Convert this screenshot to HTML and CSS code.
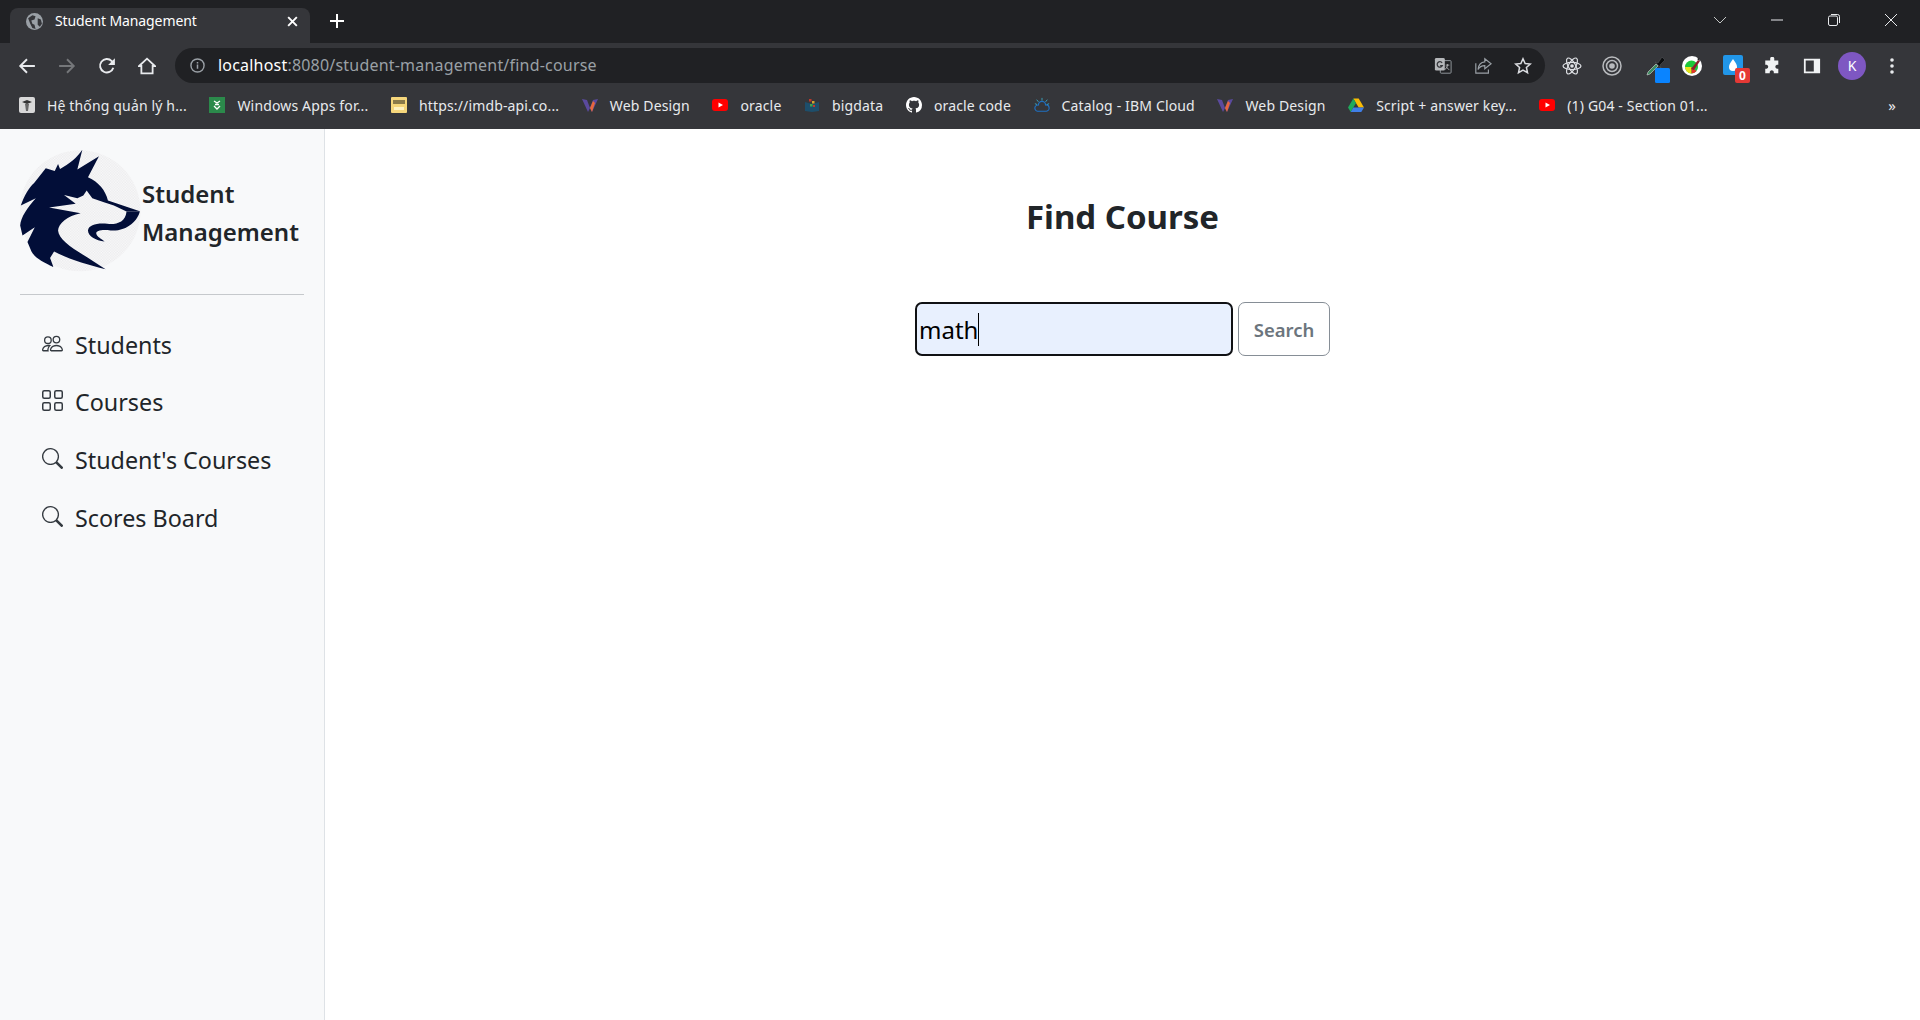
FILE: index.html
```html
<!DOCTYPE html>
<html lang="en">
<head>
    <meta charset="UTF-8">
    <meta name="viewport" content="width=device-width, initial-scale=1.0">
    <title>Student Management</title>
    <link rel="stylesheet" href="styles.css">
</head>
<body>
    <svg class="sprite" xmlns="http://www.w3.org/2000/svg">
        <symbol id="i-web" viewBox="0 0 16 16"><path d="M0 2l5 1 3 8-2 4z" fill="#5b4a9e"/><path d="M16 2l-5 1-3 8 2 4z" fill="#5b4a9e"/><path d="M11 4l-3 7 2 4 3-9z" fill="#e8673c"/></symbol>
        <symbol id="i-yt" viewBox="0 0 16 16"><rect y="2" width="16" height="12" rx="3" fill="#f00"/><path d="M6.5 5.5v5L11 8z" fill="#fff"/></symbol>
        <symbol id="i-gh" viewBox="0 0 16 16"><path fill="#fff" d="M8 0C3.58 0 0 3.58 0 8c0 3.54 2.29 6.53 5.47 7.59.4.07.55-.17.55-.38 0-.19-.01-.82-.01-1.49-2.01.37-2.53-.49-2.69-.94-.09-.23-.48-.94-.82-1.13-.28-.15-.68-.52-.01-.53.63-.01 1.08.58 1.23.82.72 1.21 1.87.87 2.33.66.07-.52.28-.87.51-1.07-1.78-.2-3.64-.89-3.64-3.95 0-.87.31-1.59.82-2.15-.08-.2-.36-1.02.08-2.12 0 0 .67-.21 2.2.82.64-.18 1.32-.27 2-.27.68 0 1.36.09 2 .27 1.53-1.04 2.2-.82 2.2-.82.44 1.1.16 1.92.08 2.12.51.56.82 1.27.82 2.15 0 3.07-1.87 3.75-3.65 3.95.29.25.54.73.54 1.48 0 1.07-.01 1.93-.01 2.2 0 .21.15.46.55.38A8.013 8.013 0 0016 8c0-4.42-3.58-8-8-8z"/></symbol>
        <symbol id="i-search" viewBox="0 0 16 16"><path fill="currentColor" d="M11.742 10.344a6.5 6.5 0 1 0-1.397 1.398h-.001c.03.04.062.078.098.115l3.85 3.85a1 1 0 0 0 1.415-1.414l-3.85-3.85a1.007 1.007 0 0 0-.115-.1zM12 6.5a5.5 5.5 0 1 1-11 0 5.5 5.5 0 0 1 11 0z"/></symbol>
    </svg>

    <!-- browser chrome -->
    <header class="chrome">
        <div class="tabstrip">
            <div class="tab">
                <svg class="favicon" viewBox="0 0 16 16"><circle cx="8" cy="8" r="8" fill="#9aa0a6"/><path d="M2 5l4-3 3 1-1 3-3 1 1 3 2 1 1 4-3-1-2-4zM11 5l3 1 1 4-2 3-2-2z" fill="#35363a"/></svg>
                <span class="tab-title">Student Management</span>
                <svg class="tab-close" viewBox="0 0 12 12"><path d="M2 2l8 8M10 2l-8 8" stroke="#fff" stroke-width="1.8"/></svg>
            </div>
            <svg class="new-tab" viewBox="0 0 16 16"><path d="M8 1v14M1 8h14" stroke="#fff" stroke-width="2"/></svg>
            <div class="window-controls">
                <svg viewBox="0 0 14 14"><path d="M1 4l6 6 6-6" fill="none" stroke="#c4c7c5"/></svg>
                <svg viewBox="0 0 14 14"><path d="M1 7h12" stroke="#e8eaed"/></svg>
                <svg viewBox="0 0 14 14"><rect x="1.5" y="3" width="9" height="9.5" rx="1.5" fill="none" stroke="#e8eaed"/><path d="M4 1.5h6.5a2 2 0 0 1 2 2V10" fill="none" stroke="#e8eaed"/></svg>
                <svg viewBox="0 0 14 14"><path d="M1 1l12 12M13 1L1 13" stroke="#e8eaed"/></svg>
            </div>
        </div>

        <div class="toolbar">
            <div class="slot"><svg viewBox="0 0 16 16"><path d="M15 8H2M8 2L2 8l6 6" fill="none" stroke="#e8eaed" stroke-width="1.7"/></svg></div>
            <div class="slot"><svg viewBox="0 0 16 16"><path d="M1 8h13M8 2l6 6-6 6" fill="none" stroke="#75777a" stroke-width="1.7"/></svg></div>
            <div class="slot"><svg viewBox="0 0 16 16"><path d="M13.6 9.5A6 6 0 1 1 12.2 3.6L14 5.5" fill="none" stroke="#e8eaed" stroke-width="1.7"/><path d="M15 1v6H9z" fill="#e8eaed"/></svg></div>
            <div class="slot"><svg viewBox="0 0 16 16"><path d="M1 8l7-6.5L15 8h-2v6.5H3V8z" fill="none" stroke="#e8eaed" stroke-width="1.6"/></svg></div>

            <div class="omnibox">
                <svg class="info" viewBox="0 0 16 16"><circle cx="8" cy="8" r="7" fill="none" stroke="#9aa0a6" stroke-width="1.5"/><path d="M8 7v4.5M8 4.2v1.6" stroke="#9aa0a6" stroke-width="1.6"/></svg>
                <span class="url"><span class="url-host">localhost</span>:8080/student-management/find-course</span>
                <div class="omni-icons">
                    <div class="slot"><svg viewBox="0 0 20 20"><rect x="7" y="4" width="12" height="14" rx="1" fill="none" stroke="#9aa0a6"/><rect x="1" y="1" width="11" height="14" rx="1.5" fill="#b5b7ba"/><path d="M9 6.5a3 3 0 1 0 .3 3H6.8" fill="none" stroke="#35363a" stroke-width="1.4"/><path d="M13 9h4M15 8v1c0 2-1.5 4-3 5M13.5 10.5c.7 1.6 2 3 3.5 3.5" fill="none" stroke="#b5b7ba"/></svg></div>
                    <div class="slot"><svg viewBox="0 0 20 20"><path d="M2 7v11h14v-4" fill="none" stroke="#9aa0a6" stroke-width="1.3"/><path d="M12 2l7 5.5-7 5.5V9.5C8.5 9.5 6 11 4.5 14 5 9 8 5.7 12 5.5z" fill="none" stroke="#9aa0a6" stroke-width="1.3"/></svg></div>
                    <div class="slot"><svg viewBox="0 0 20 20"><path d="M10 2l2.4 5.3 5.7.6-4.300 3.800 1.200 5.700L10 14.500l-5 2.900 1.200-5.700L1.900 7.900l5.700-.6z" fill="none" stroke="#dadce0" stroke-width="1.7"/></svg></div>
                </div>
            </div>

            <div class="slot"><svg class="react" viewBox="0 0 20 20"><g fill="none" stroke="#dfe1e5" stroke-width="1.2"><ellipse cx="10" cy="10" rx="9" ry="3.6"/><ellipse cx="10" cy="10" rx="9" ry="3.6" transform="rotate(60 10 10)"/><ellipse cx="10" cy="10" rx="9" ry="3.6" transform="rotate(120 10 10)"/></g><circle cx="10" cy="10" r="1.8" fill="#dfe1e5"/></svg></div>
            <div class="slot"><svg class="target" viewBox="0 0 20 20"><g fill="none" stroke="#b8babd"><circle cx="10" cy="10" r="9" stroke-width="1.5"/><circle cx="10" cy="10" r="5.5" stroke-width="1.5"/></g><circle cx="10" cy="10" r="2.8" fill="#b8babd"/></svg></div>
            <div class="slot slot-eyedrop"><svg viewBox="0 0 26 28"><path d="M2 20l1-3 8-8 2 2-8 8z" fill="#3d8a5f" stroke="#d5d7d9" stroke-width=".6"/><path d="M10 7l3 1 4-6 3 3-5 5 1 3z" fill="#0c0e10" stroke="#5a5d60" stroke-width=".5"/><rect x="10" y="13" width="15" height="15" rx="1.5" fill="#0a84ff"/></svg></div>
            <div class="slot"><svg class="wheel" viewBox="0 0 20 20"><circle cx="10" cy="10" r="10" fill="#fff"/><circle cx="9.5" cy="11" r="6.5" fill="#1ec83a"/><path d="M9.5 11L3 11a6.5 6.5 0 0 0 6.5 6.5z" fill="#e9e21b"/><path d="M9.5 11v6.5a6.5 6.5 0 0 0 5-2.5z" fill="#e5352b"/><path d="M9 13L16 4l2 1-6 9z" fill="#8e1f2c"/><path d="M15 3l3 2-1-3z" fill="#101214"/></svg></div>
            <div class="slot slot-drop"><svg viewBox="0 0 28 28"><rect x="1" y="1" width="20" height="20" rx="2" fill="#2196e8"/><path d="M11 5c3 4 4 6 4 8a4 4 0 0 1-8 0c0-2 1-4 4-8z" fill="#fff"/></svg><span class="drop-badge">0</span></div>
            <div class="slot"><svg class="puzzle" viewBox="0 0 20 20"><path fill="#f1f3f4" d="M8 1.5a2.3 2.3 0 0 1 4.5 0V4H17v4.5h-1.5a2.3 2.3 0 0 0 0 4.5H17v5h-5v-1.5a2.3 2.3 0 0 0-4.5 0V18H2.5v-5H4a2.3 2.3 0 0 0 0-4.500H2.500V4H8z"/></svg></div>
            <div class="slot"><svg class="panel" viewBox="0 0 20 20"><path fill="#f1f3f4" fill-rule="evenodd" d="M1 2h18v16H1zM3 4v12h9V4z"/></svg></div>
            <div class="slot"><span class="avatar">K</span></div>
            <div class="slot"><svg class="dots" viewBox="0 0 4 16"><circle cx="2" cy="2" r="1.8" fill="#e8eaed"/><circle cx="2" cy="8" r="1.8" fill="#e8eaed"/><circle cx="2" cy="14" r="1.8" fill="#e8eaed"/></svg></div>
        </div>

        <nav class="bookmarks">
            <a class="bookmark"><svg viewBox="0 0 16 16"><rect width="16" height="16" rx="2" fill="#d8d8d8"/><path d="M3 5l5-2 5 2-5 2z" fill="#333"/><path d="M6 7h4l-1 7H7z" fill="#666"/></svg>Hệ thống quản lý h...</a>
            <a class="bookmark"><svg viewBox="0 0 16 16"><rect width="16" height="16" fill="#2b8a4b"/><path d="M5 4l3 2 3-2M5 9l3 3 3-3M6 7.5h4" fill="none" stroke="#fff" stroke-width="1.3"/></svg>Windows Apps for...</a>
            <a class="bookmark"><svg viewBox="0 0 16 16"><rect width="16" height="16" rx="1" fill="#f5d67b"/><rect x="2" y="3" width="12" height="4" fill="#8a7a4a"/><rect x="3" y="10" width="10" height="3" fill="#fff3c4"/></svg>https://imdb-api.co...</a>
            <a class="bookmark"><svg><use href="#i-web"/></svg>Web Design</a>
            <a class="bookmark"><svg><use href="#i-yt"/></svg>oracle</a>
            <a class="bookmark"><svg viewBox="0 0 16 16"><path d="M1 5l7 2 7-2v9l-7 1-7-1z" fill="#1d4e6b"/><rect x="5" y="2" width="2.5" height="2.5" fill="#c0392b"/><rect x="8" y="4" width="2.5" height="2.5" fill="#d4a72c"/><rect x="6" y="7" width="2.5" height="2.5" fill="#3fa34d"/><rect x="9" y="8" width="2" height="2" fill="#c0392b"/></svg>bigdata</a>
            <a class="bookmark"><svg><use href="#i-gh"/></svg>oracle code</a>
            <a class="bookmark"><svg viewBox="0 0 18 18"><path d="M5 9a4 4 0 0 1 8 0 3.5 3.5 0 0 1 1 7H4a3.5 3.5 0 0 1 1-7z" fill="none" stroke="#1f70c1" stroke-width="1.3"/><path d="M9 1v3M3 3l2 2.5M15 3l-2 2.5M1 7.5l2.5 1M17 7.5l-2.5 1" stroke="#3aa0b8" stroke-width="1.1"/></svg>Catalog - IBM Cloud</a>
            <a class="bookmark"><svg><use href="#i-web"/></svg>Web Design</a>
            <a class="bookmark"><svg viewBox="0 0 16 16"><path d="M5.3 1.5h5.4L16 10.5h-5.3z" fill="#fbbc04"/><path d="M5.3 1.5L0 10.5l2.7 4.5L8 6z" fill="#1faa5b"/><path d="M2.7 15h10.6l2.7-4.5H5.3z" fill="#3f7fe8"/></svg>Script + answer key...</a>
            <a class="bookmark"><svg><use href="#i-yt"/></svg>(1) G04 - Section 01...</a>
            <span class="more">»</span>
        </nav>
    </header>

    <div class="app">
        <aside class="sidebar">
            <div class="brand">
                <svg class="logo" viewBox="18 10 366 376">
                    <defs>
                        <pattern id="checker" width="8" height="8" patternUnits="userSpaceOnUse">
                            <rect width="8" height="8" fill="#f9f9fa"/>
                            <rect width="4" height="4" fill="#ebebed"/>
                            <rect x="4" y="4" width="4" height="4" fill="#ebebed"/>
                        </pattern>
                    </defs>
                    <circle cx="198" cy="196" r="182" fill="url(#checker)"/>
                    <path fill="#020e38" d="M205 12L190 72 255 32 222 95C255 110 275 135 282 165L378 197 338 198 300 180 270 170 235 158 218 135 208 150 190 158 150 148 185 175 105 186 200 203C160 210 133 235 132 255 135 290 190 315 275 372 220 358 160 340 120 318L108 338 118 365C85 350 60 335 52 318L40 290 62 245 25 270 18 240C20 215 40 185 65 158L20 180C30 150 45 125 60 112L95 68 122 76 132 55 138 70C165 55 190 35 205 12Z"/>
                    <path fill="#020e38" d="M378 197C372 225 340 258 290 255 265 252 245 255 247 265 250 275 262 280 272 288 245 285 222 272 222 255 224 238 250 232 280 235 305 238 335 232 338 198Z"/>
                </svg>
                <div class="brand-name">Student<br>Management</div>
            </div>
            <hr class="divider">
            <ul class="nav">
                <li class="nav-item"><svg viewBox="0 0 16 16"><path fill="currentColor" d="M15 14s1 0 1-1-1-4-5-4-5 3-5 4 1 1 1 1h8Zm-7.978-1A.261.261 0 0 1 7 12.996c.001-.264.167-1.03.76-1.72C8.312 10.629 9.282 10 11 10c1.717 0 2.687.63 3.24 1.276.593.69.758 1.457.76 1.72l-.008.002a.274.274 0 0 1-.014.002H7.022ZM11 7a2 2 0 1 0 0-4 2 2 0 0 0 0 4Zm3-2a3 3 0 1 1-6 0 3 3 0 0 1 6 0ZM6.936 9.28a5.88 5.88 0 0 0-1.23-.247A7.35 7.35 0 0 0 5 9c-4 0-5 3-5 4 0 .667.333 1 1 1h4.216A2.238 2.238 0 0 1 5 13c0-1.01.377-2.042 1.09-2.904.243-.294.526-.569.846-.816ZM4.92 10A5.493 5.493 0 0 0 4 13H1c0-.26.164-1.03.76-1.724.545-.636 1.492-1.256 3.16-1.275ZM1.5 5.5a3 3 0 1 1 6 0 3 3 0 0 1-6 0Zm3-2a2 2 0 1 0 0 4 2 2 0 0 0 0-4Z"/></svg>Students</li>
                <li class="nav-item"><svg viewBox="1 1 14 14"><path fill="currentColor" d="M1 2.5A1.5 1.5 0 0 1 2.5 1h3A1.5 1.5 0 0 1 7 2.5v3A1.5 1.5 0 0 1 5.5 7h-3A1.5 1.5 0 0 1 1 5.5v-3zM2.5 2a.5.5 0 0 0-.5.5v3a.5.5 0 0 0 .5.5h3a.5.5 0 0 0 .5-.5v-3a.5.5 0 0 0-.5-.5h-3zm6.5.5A1.5 1.5 0 0 1 10.5 1h3A1.5 1.5 0 0 1 15 2.5v3A1.5 1.5 0 0 1 13.5 7h-3A1.5 1.5 0 0 1 9 5.5v-3zm1.5-.5a.5.5 0 0 0-.5.5v3a.5.5 0 0 0 .5.5h3a.5.5 0 0 0 .5-.5v-3a.5.5 0 0 0-.5-.5h-3zM1 10.5A1.5 1.5 0 0 1 2.5 9h3A1.5 1.5 0 0 1 7 10.5v3A1.5 1.5 0 0 1 5.5 15h-3A1.5 1.5 0 0 1 1 13.5v-3zm1.5-.5a.5.5 0 0 0-.5.5v3a.5.5 0 0 0 .5.5h3a.5.5 0 0 0 .5-.5v-3a.5.5 0 0 0-.5-.5h-3zm6.5.5A1.5 1.5 0 0 1 10.5 9h3a1.5 1.5 0 0 1 1.5 1.5v3a1.5 1.5 0 0 1-1.5 1.5h-3A1.5 1.5 0 0 1 9 13.5v-3zm1.5-.5a.5.5 0 0 0-.5.5v3a.5.5 0 0 0 .5.5h3a.5.5 0 0 0 .5-.5v-3a.5.5 0 0 0-.5-.5h-3z"/></svg>Courses</li>
                <li class="nav-item"><svg><use href="#i-search"/></svg>Student's Courses</li>
                <li class="nav-item"><svg><use href="#i-search"/></svg>Scores Board</li>
            </ul>
        </aside>

        <main class="content">
            <h1 class="page-title">Find Course</h1>
            <form class="search-form">
                <div class="search-input"><span class="search-value">math</span></div>
                <button type="button" class="search-btn">Search</button>
            </form>
        </main>
    </div>
</body>
</html>
```

FILE: styles.css
```css
* {
    box-sizing: border-box;
}

body {
    margin: 0;
    height: 100vh;
    display: flex;
    flex-direction: column;
    overflow: hidden;
    background: #fff;
    color: #212529;
    font-family: "Noto Sans", "Open Sans", sans-serif;
}

.sprite {
    display: none;
}

/* Browser chrome */
.chrome {
    flex: none;
    background: #35363a;
    color: #e8eaed;
    font-size: 14px;
}

.tabstrip {
    height: 43px;
    display: flex;
    align-items: flex-end;
    padding-left: 10px;
    background: #202124;
}

.tab {
    width: 300px;
    height: 35px;
    display: flex;
    align-items: center;
    padding: 0 11px 8px 16px;
    background: #35363a;
    border-radius: 8px 8px 0 0;
    color: #fff;
}

.favicon {
    width: 17px;
    height: 17px;
    margin-right: 12px;
}

.tab-title {
    flex: 1;
    margin-top: -2px;
    letter-spacing: -0.1px;
}

.tab-close {
    width: 13px;
    height: 13px;
}

.new-tab {
    width: 16px;
    height: 16px;
    margin: 0 0 14px 19px;
}

.window-controls {
    margin-left: auto;
    align-self: stretch;
    display: flex;
    align-items: center;
    gap: 43px;
    padding: 0 22px 4px 0;
}

.window-controls svg {
    width: 14px;
    height: 14px;
}

.toolbar {
    height: 40px;
    display: flex;
    align-items: flex-end;
    padding: 0 8px 0 7px;
}

.slot {
    position: relative;
    flex: none;
    width: 40px;
    height: 35px;
    display: flex;
    align-items: center;
    justify-content: center;
}

.slot svg {
    width: 18px;
    height: 18px;
}

.slot .react,
.slot .target,
.slot .wheel {
    width: 20px;
    height: 20px;
}

.slot .dots {
    width: 4px;
    height: 16px;
}

.slot-eyedrop svg {
    flex: none;
    width: 26px;
    height: 28px;
    margin: 7px 0 0 12px;
}

.slot-drop svg {
    flex: none;
    width: 28px;
    height: 28px;
    margin: 5px 0 0 8px;
}

.drop-badge {
    position: absolute;
    top: 20px;
    left: 23px;
    width: 15px;
    height: 15px;
    background: #e53935;
    border-radius: 2px;
    color: #fff;
    font-size: 12px;
    font-weight: 700;
    line-height: 15px;
    text-align: center;
}

.avatar {
    width: 28px;
    height: 28px;
    border-radius: 50%;
    background: #7e57c2;
    color: #fff;
    font-size: 14px;
    line-height: 28px;
    text-align: center;
}

.omnibox {
    flex: 1;
    height: 35px;
    display: flex;
    align-items: center;
    margin-left: 8px;
    margin-right: 7px;
    padding: 0 2px 0 15px;
    background: #202124;
    border-radius: 18px;
}

.info {
    width: 15px;
    height: 15px;
    margin-right: 13px;
}

.url {
    flex: 1;
    margin-top: -2px;
    color: #9aa0a6;
    font-size: 16px;
    letter-spacing: 0.2px;
}

.url-host {
    color: #fff;
}

.omni-icons {
    display: flex;
}

.bookmarks {
    height: 46px;
    display: flex;
    align-items: center;
    padding: 0 24px 2px 19px;
    gap: 22.6px;
}

.bookmark {
    display: flex;
    align-items: center;
    gap: 12px;
    color: #e8eaed;
    white-space: nowrap;
    letter-spacing: 0.15px;
}

.bookmark svg {
    flex: none;
    width: 16px;
    height: 16px;
}

.more {
    margin-left: auto;
    font-size: 15px;
}

/* App layout */
.app {
    flex: 1;
    display: flex;
    min-height: 0;
}

.sidebar {
    flex: none;
    width: 325px;
    padding: 20px 20px 0;
    background: #f8f9fa;
    border-right: 1px solid #dee2e6;
}

.brand {
    display: flex;
    align-items: center;
}

.logo {
    flex: none;
    width: 122px;
    height: 125px;
}

.brand-name {
    margin-top: 2px;
    font-size: 24px;
    font-weight: 600;
    line-height: 38px;
    white-space: nowrap;
}

.divider {
    margin: 20px 0 21px;
    border: 0;
    border-top: 1px solid #c6c9cc;
}

.nav {
    margin: 0;
    padding: 0;
    list-style: none;
}

.nav-item {
    height: 57.6px;
    display: flex;
    align-items: center;
    padding-left: 22px;
    font-size: 23.3px;
}

.nav-item svg {
    flex: none;
    width: 21px;
    height: 21px;
    margin: -3px 12px 0 0;
    color: #343a40;
}

.content {
    flex: 1;
    display: flex;
    flex-direction: column;
    align-items: center;
    padding-top: 64px;
}

.page-title {
    margin: 0 0 61px;
    font-size: 33px;
    font-weight: 700;
    line-height: 48px;
}

.search-form {
    display: flex;
    gap: 5px;
}

.search-input {
    width: 318px;
    height: 54px;
    display: flex;
    align-items: center;
    padding-left: 2px;
    background: #e8f0fe;
    border: 2px solid #101114;
    border-radius: 7px;
    color: #000;
    font-size: 24px;
}

.search-value {
    height: 33px;
    line-height: 33px;
    border-right: 1.5px solid #000;
}

.search-btn {
    width: 92px;
    height: 54px;
    padding: 0;
    background: #fff;
    border: 1px solid #868e96;
    border-radius: 7px;
    color: #6c757d;
    font-family: inherit;
    font-size: 18.5px;
    font-weight: 600;
}
```
